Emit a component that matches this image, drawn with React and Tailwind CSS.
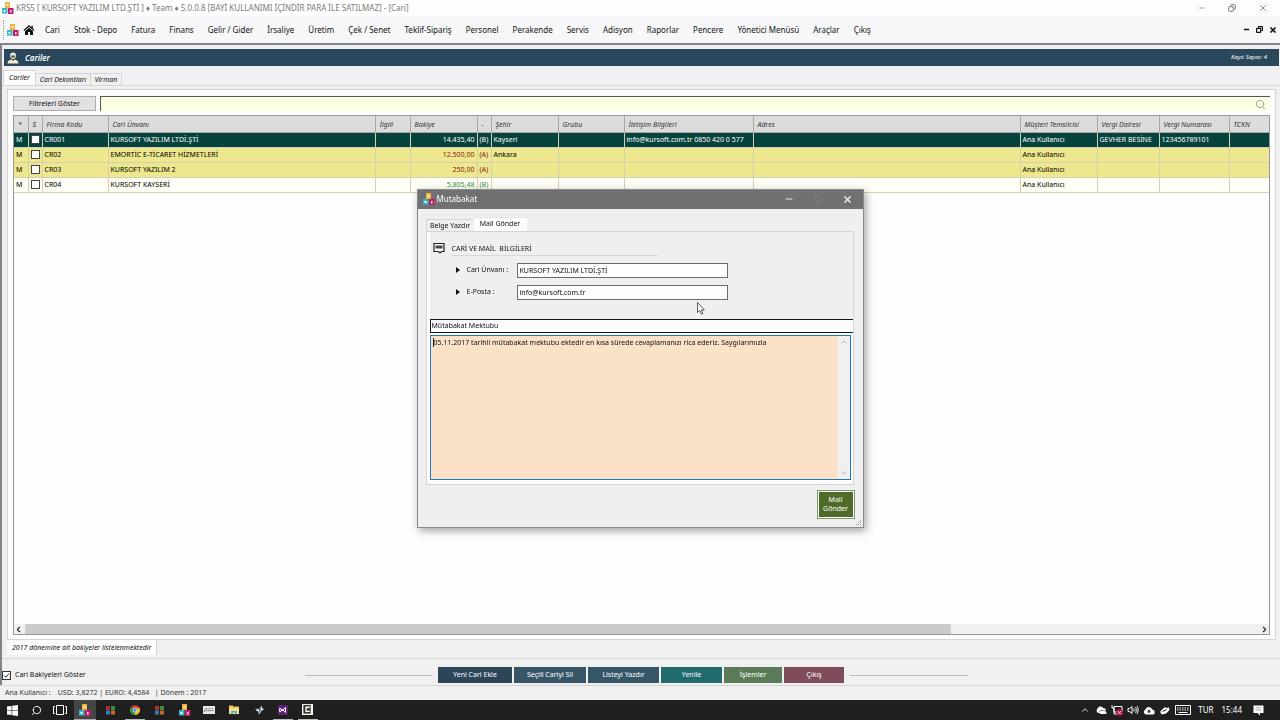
import React, { useState } from "react";
import { Search, X, Minus, Square, Copy, ChevronUp, ChevronDown, ChevronLeft, ChevronRight } from "lucide-react";

const menuItems = [
  "Cari", "Stok - Depo", "Fatura", "Finans", "Gelir / Gider", "İrsaliye", "Üretim",
  "Çek / Senet", "Teklif-Sipariş", "Personel", "Perakende", "Servis", "Adisyon",
  "Raporlar", "Pencere", "Yönetici Menüsü", "Araçlar", "Çıkış",
];

const columns = [
  { key: "mark", label: "*", col: "w-[14px]" },
  { key: "sel", label: "S", col: "w-[14px]" },
  { key: "code", label: "Firma Kodu", col: "w-[66px]" },
  { key: "title", label: "Cari Ünvanı", col: "w-[267px]" },
  { key: "contact", label: "İlgili", col: "w-[35px]" },
  { key: "balance", label: "Bakiye", col: "w-[67px]" },
  { key: "side", label: "-", col: "w-[14px]" },
  { key: "city", label: "Şehir", col: "w-[67px]" },
  { key: "group", label: "Grubu", col: "w-[66px]" },
  { key: "info", label: "İletişim Bilgileri", col: "w-[129px]" },
  { key: "address", label: "Adres", col: "w-[267px]" },
  { key: "agent", label: "Müşteri Temsilcisi", col: "w-[77px]" },
  { key: "office", label: "Vergi Dairesi", col: "w-[62px]" },
  { key: "taxNo", label: "Vergi Numarası", col: "w-[70px]" },
  { key: "tckn", label: "TCKN", col: "" },
];

const rows = [
  {
    code: "CR001", title: "KURSOFT YAZILIM LTDİ.ŞTİ", balance: "14.435,40", side: "(B)", city: "Kayseri",
    info: "info@kursoft.com.tr 0850 420 0 577", agent: "Ana Kullanıcı", office: "GEVHER BESİNE", taxNo: "123456789101",
    style: "bg-[#06433c] text-white", tone: "text-white",
  },
  {
    code: "CR02", title: "EMORTİC E-TİCARET HİZMETLERİ", balance: "12.500,00", side: "(A)", city: "Ankara",
    agent: "Ana Kullanıcı", style: "bg-[#ede78d]", tone: "text-[#8b1a10]",
  },
  {
    code: "CR03", title: "KURSOFT YAZILIM 2", balance: "250,00", side: "(A)",
    agent: "Ana Kullanıcı", style: "bg-[#ede78d]", tone: "text-[#8b1a10]",
  },
  {
    code: "CR04", title: "KURSOFT KAYSERİ", balance: "5.805,48", side: "(B)",
    agent: "Ana Kullanıcı", style: "bg-[#fefef4]", tone: "text-[#35914b]",
  },
];

const actions = [
  { label: "Yeni Cari Ekle", style: "w-[74px] bg-[#2c4557]" },
  { label: "Seçili Cariyi Sil", style: "w-[72px] bg-[#365668]" },
  { label: "Listeyi Yazdır", style: "w-[71px] bg-[#365668]" },
  { label: "Yenile", style: "w-[61px] bg-[#216b6d]" },
  { label: "İşlemler", style: "w-[58px] bg-[#5b7b58]" },
  { label: "Çıkış", style: "w-[60px] bg-[#7f4d5a]" },
];

function Logo({ className = "size-3" }) {
  return (
    <svg viewBox="0 0 12 12" className={className}>
      <rect x="3" y="0" width="5" height="6" fill="#f2b33d" />
      <rect x="0" y="6" width="5.5" height="5.5" fill="#35b8c4" />
      <rect x="6" y="6" width="5.5" height="6" fill="#c21d6b" />
      <rect x="4.5" y="2" width="2" height="2" fill="#fff3cf" />
      <rect x="1.5" y="8" width="2" height="2" fill="#e3fbff" />
      <rect x="8" y="8" width="1.5" height="2.5" fill="#ffd9ec" />
    </svg>
  );
}

function HomeIcon() {
  return (
    <svg viewBox="0 0 12 12" className="size-3">
      <path d="M6 1 0.5 6l0.8 0.9L6 2.8l4.7 4.1 0.8-0.9L9.8 4.5V1.7H8.4v1.5z" fill="#111" />
      <path d="M6 3.8 2 7.2V11h3V8h2v3h3V7.2z" fill="#111" />
    </svg>
  );
}

function UserIcon() {
  return (
    <svg viewBox="0 0 12 12" className="size-3">
      <path d="M6 0.5c2 0 3 1.2 3 3C9 5.300 7.800 7 6 7S3 5.300 3 3.500c0-1.800 1-3 3-3z" fill="#f3ecc8" />
      <path d="M3.800 3.500C5 3.700 7 3.400 8.200 3.500 8 5 7.200 6 6 6S4 5 3.800 3.500z" fill="#4b6470" />
      <path d="M0.500 11.500c0-2.500 1.500-3.500 4-4L6 9l1.500-1.500c2.500 0.500 4 1.500 4 4z" fill="#f3ecc8" />
    </svg>
  );
}

function NoteIcon() {
  return (
    <svg viewBox="0 0 12 12" className="size-3">
      <path d="M1 1.500h10v8H8.500L7 11 5.500 9.500H1z" fill="#fdfdfd" stroke="#222" strokeWidth="1.200" />
      <path d="M2.500 3.500h7v3h-7z" fill="#444" />
    </svg>
  );
}

function Blocks() {
  return (
    <svg viewBox="0 0 10 10" className="size-2.5">
      <rect x="0" y="1" width="4" height="4" fill="#a83232" />
      <rect x="5" y="1" width="4" height="4" fill="#3f8c3a" />
      <rect x="0" y="5.500" width="4" height="4" fill="#2c7fb5" />
      <rect x="5" y="5.500" width="4" height="4" fill="#c26a2a" />
    </svg>
  );
}

const taskIcons = [
  { name: "KRS5", active: true, icon: <Logo /> },
  { name: "Bloklar", icon: <Blocks /> },
  {
    name: "Chrome",
    open: true,
    icon: (
      <svg viewBox="0 0 12 12" className="size-2.5">
        <path d="M6 6 1 3a6 6 0 0 1 10.200 0z" fill="#d9453a" />
        <path d="M6 6 11.200 3A6 6 0 0 1 6 12z" fill="#f2c230" />
        <path d="M6 6v6A6 6 0 0 1 0.800 3z" fill="#379f50" />
        <circle cx="6" cy="6" r="2.600" fill="#fff" />
        <circle cx="6" cy="6" r="2" fill="#4284e0" />
      </svg>
    ),
  },
  { name: "Bloklar 2", icon: <Blocks /> },
  { name: "KRS", icon: <Logo /> },
  {
    name: "Terminal",
    icon: (
      <svg viewBox="0 0 12 8" className="w-3 h-2">
        <rect width="12" height="8" fill="#e8eae8" />
        <path d="M1.500 2.500h9" stroke="#9aa6a2" strokeWidth="0.800" />
        <path d="M1.500 6c0-3 2-3 2.500-1M5 5.500c1-2 2-2 2.500 0M8.500 4.500h2" fill="none" stroke="#46655b" strokeWidth="0.900" />
      </svg>
    ),
  },
  {
    name: "Dosyalar",
    icon: (
      <svg viewBox="0 0 12 11" className="w-3 h-2.5">
        <path d="M0.500 0.500h4l1 1.200h6V10H0.500z" fill="#ecc95a" />
        <path d="M0.500 3.500h11V10H0.500z" fill="#f8e08a" />
        <path d="M3 10V6.500h6V10H7.500V8.200h-3V10z" fill="#45a3d6" />
      </svg>
    ),
  },
  {
    name: "Kuş",
    icon: (
      <svg viewBox="0 0 12 12" className="size-2.5">
        <path d="M1 4l5 1 3-4 1 3 2 1-3 2c-1 3-3 4-4 4l1-3-4-1 2-1z" fill="#e4edf2" />
        <path d="M6 5l3-3-1 5-2 2z" fill="#3b7096" />
      </svg>
    ),
  },
  {
    name: "Visual Studio",
    open: true,
    icon: (
      <svg viewBox="0 0 12 12" className="size-2.5">
        <rect width="12" height="12" fill="#5c2073" />
        <path d="M2 4v4l4-2 3 3V3L6 6z" fill="none" stroke="#fff" strokeWidth="1.200" />
      </svg>
    ),
  },
  {
    name: "Camtasia",
    open: true,
    icon: (
      <svg viewBox="0 0 12 12" className="size-[11px]">
        <rect width="12" height="12" fill="#f4f4f0" />
        <rect x="1.500" y="1" width="8" height="9.500" fill="#34362f" />
        <path d="M8.500 3.500H4.500v4.500h4" fill="none" stroke="#fff" strokeWidth="1.500" />
      </svg>
    ),
  },
];

function TitleBar() {
  return (
    <header className="flex h-4 shrink-0 items-center bg-[#fdfdfd] pl-0.5 pr-3">
      <Logo />
      <h1 className="ml-0.5 text-[8px] leading-4 text-[#7c7c7c]">
        KRS5 [ KURSOFT YAZILIM LTD.ŞTİ ] ♦ Team ♦ 5.0.0.8 [BAYİ KULLANIMI İÇİNDİR PARA İLE SATILMAZ] - [Cari]
      </h1>
      <div className="ml-auto flex items-center gap-[22px] text-[#777]">
        <button aria-label="Küçült"><Minus size={8} strokeWidth={2} /></button>
        <button aria-label="Geri yükle"><Copy size={8} strokeWidth={3} className="-scale-x-100" /></button>
        <button aria-label="Kapat"><X size={10} strokeWidth={2} /></button>
      </div>
    </header>
  );
}

function MenuBar() {
  return (
    <nav className="flex h-[27px] shrink-0 items-center bg-[#f7f7f9] pl-[3px] pr-[3px]">
      <span className="h-5 border-l border-dotted border-[#999]" />
      <span className="ml-[3px]"><Logo /></span>
      <span className="ml-1"><HomeIcon /></span>
      <div className="ml-2.5 flex gap-[14px] text-[8px] text-[#141414]">
        {menuItems.map((item) => (
          <button key={item} className="whitespace-nowrap">{item}</button>
        ))}
      </div>
      <div className="ml-auto flex items-center gap-1.5 text-[#111]">
        <button aria-label="Pencereyi küçült"><Minus size={7} strokeWidth={5} /></button>
        <button aria-label="Pencereyi geri yükle"><Copy size={7} strokeWidth={4} className="-scale-x-100" /></button>
        <button aria-label="Pencereyi kapat"><X size={8} strokeWidth={5} /></button>
      </div>
    </nav>
  );
}

function CustomerTable() {
  return (
    <table className="w-full table-fixed border-collapse leading-[14px]">
      <colgroup>
        {columns.map((c) => <col key={c.key} className={c.col} />)}
      </colgroup>
      <thead>
        <tr className="h-4 bg-[#dcdcdc] text-[#333]">
          {columns.map((c) => (
            <th
              key={c.key}
              className="overflow-hidden whitespace-nowrap border-b border-r border-[#a8a8a8] pb-0 pl-1 pr-0 pt-[3px] text-left font-normal italic leading-[12px] last:border-r-0"
            >
              {c.label}
            </th>
          ))}
        </tr>
      </thead>
      <tbody>
        {rows.map((row) => (
          <tr key={row.code} className={`h-[15px] ${row.style}`}>
            {columns.map((c) => (
              <td
                key={c.key}
                className={`overflow-hidden whitespace-nowrap border-b border-r border-[#d3d0b4] px-0.5 py-0 last:border-r-0 ${
                  c.key === "balance" ? `text-right ${row.tone}` : c.key === "side" ? row.tone : ""
                }`}
              >
                {c.key === "mark" && "M"}
                {c.key === "sel" && (
                  <input
                    type="checkbox"
                    aria-label={row.code}
                    className="block size-[9px] appearance-none border border-[#444] bg-white checked:bg-[#444]"
                  />
                )}
                {row[c.key]}
              </td>
            ))}
          </tr>
        ))}
      </tbody>
    </table>
  );
}

function Workspace() {
  return (
    <main className="flex min-h-0 flex-1 flex-col border-l-2 border-t-2 border-[#808488] bg-[#f0f0f0]">
      <div className="ml-0.5 mr-px mt-1 flex h-[17px] shrink-0 items-center bg-[#2a475b] pl-[3px] pr-3 text-white">
        <UserIcon />
        <h2 className="ml-1.5 text-[8px] font-semibold italic">Cariler</h2>
        <span className="ml-auto text-[6px] italic">Kayıt Sayısı: 4</span>
      </div>

      <div role="tablist" className="mt-1 flex h-[15px] shrink-0 items-end pl-px italic leading-[12px] text-[#111]">
        <button role="tab" className="h-[15px] w-[33px] border-x border-t border-[#d5d5d5] bg-white">Cariler</button>
        <button role="tab" className="h-3 w-[55px] border-r border-t border-[#d5d5d5] leading-[11px]">Cari Dekontları</button>
        <button role="tab" className="h-3 w-[31px] border-r border-t border-[#d5d5d5] leading-[11px]">Virman</button>
      </div>

      <div className="flex min-h-0 flex-1 flex-col border-y border-[#d5d5d5] pl-[5px] pr-1 pt-[3px]">
        <div className="flex min-h-0 flex-1 flex-col border border-[#d5d5d5] bg-[#fdfdfd] px-[5px] pb-1 pt-1.5">
          <div className="flex h-[15px] shrink-0 gap-1">
            <button className="w-[83px] border border-[#adadad] bg-[#e1e1e1] leading-[13px] text-[#111]">
              Filtreleri Göster
            </button>
            <div className="flex flex-1 items-center border-l border-t border-[#555] bg-[#fdffe3] pr-1">
              <input aria-label="Ara" className="h-full min-w-0 flex-1 bg-transparent px-1 outline-none" />
              <Search size={11} className="text-[#999]" />
            </div>
          </div>

          <div className="mt-1 flex min-h-0 flex-1 flex-col border border-[#999] bg-[#fdfdfd]">
            <CustomerTable />
            <div className="mt-auto flex h-[10px] items-center bg-[#f0f0f0] text-[#222]">
              <button aria-label="Sola kaydır" className="w-[11px]"><ChevronLeft size={9} strokeWidth={3} /></button>
              <div className="h-full flex-1">
                <div className="h-full w-3/4 bg-[#cbcbcb]" />
              </div>
              <button aria-label="Sağa kaydır"><ChevronRight size={9} strokeWidth={3} /></button>
            </div>
          </div>
        </div>
        <div className="flex h-[18px] shrink-0 items-start">
          <span className="h-[15px] border-r border-[#d5d5d5] bg-[#fdfdfd] px-[5px] italic leading-[16px] text-[#111]">
            2017 dönemine ait bakiyeler listelenmektedir
          </span>
        </div>
      </div>

      <div className="flex h-[26px] shrink-0 items-center pt-1.5">
        <div className="flex flex-1 items-center">
          <label className="flex items-center gap-1 text-[#111]">
            <span className="relative block size-[9px]">
              <input type="checkbox" defaultChecked className="block size-[9px] appearance-none border border-[#333] bg-white" />
              <svg viewBox="0 0 9 9" className="pointer-events-none absolute inset-0 size-[9px]">
                <path d="M2 4.500 3.800 6.300 7.200 2.500" fill="none" stroke="#222" />
              </svg>
            </span>
            Cari Bakiyeleri Göster
          </label>
          <span className="ml-auto mr-1.5 w-[127px] border-t border-[#bbb]" />
        </div>
        <div className="flex gap-0.5">
          {actions.map((a) => (
            <button key={a.label} className={`h-4 text-white ${a.style}`}>{a.label}</button>
          ))}
        </div>
        <div className="flex flex-1 items-center">
          <span className="ml-1.5 w-[118px] border-t border-[#bbb]" />
        </div>
      </div>
    </main>
  );
}

function Taskbar() {
  return (
    <footer className="flex h-5 shrink-0 items-center bg-[#1f1f1f] text-white">
      <button aria-label="Başlat" className="flex w-6 justify-center">
        <svg viewBox="0 0 12 12" className="size-[11px]" fill="#fff">
          <path d="M0 1.700 5 1v4.700H0zM5.700 0.900 12 0v5.700H5.700zM0 6.400h5V11L0 10.300zM5.700 6.400H12V12l-6.300-0.900z" />
        </svg>
      </button>
      <button aria-label="Ara" className="flex w-6 justify-center">
        <Search size={11} className="-scale-x-100" />
      </button>
      <button aria-label="Görev görünümü" className="flex w-6 justify-center">
        <svg viewBox="0 0 14 12" className="h-3 w-3.5" fill="none" stroke="#fff">
          <path d="M3.500 1.500h7v9h-7zM2 2.500H0.500v7H2M12 2.500h1.500v7H12" />
        </svg>
      </button>
      <div className="ml-0.5 flex h-full w-[244px] justify-between">
        {taskIcons.map((t) => (
          <button
            key={t.name}
            aria-label={t.name}
            className={`flex w-5 items-center justify-center border-b first:w-[22px] ${
              t.active ? "border-[#aaa] bg-[#454545]" : t.open ? "border-[#bbb]" : "border-transparent"
            }`}
          >
            {t.icon}
          </button>
        ))}
      </div>

      <div className="ml-auto flex items-center pr-4 text-[8px]">
        <ChevronUp size={10} />
        <svg viewBox="0 0 12 8" className="ml-[5px] h-2 w-3" fill="#fff">
          <path d="M3 7a3 3 0 0 1 0-5c1-2 4-2 5 0 2 0 3 1 3 2.500H6C5 4.500 4 5.500 4.500 7zM6 5h4a2 2 0 0 1 1 3H6a1.500 1.500 0 0 1 0-3z" />
        </svg>
        <svg viewBox="0 0 12 12" className="ml-1 size-3" fill="none" stroke="#fff">
          <path d="M1 1v3h2v6h3M3 2.500h8V8H3z" />
          <circle cx="8.500" cy="8.500" r="3.200" fill="#c41945" stroke="none" />
          <path d="m7.300 7.300 2.400 2.400m0-2.400L7.300 9.700" />
        </svg>
        <svg viewBox="0 0 12 10" className="ml-1 h-2.5 w-3" fill="none" stroke="#fff">
          <path d="M1 3.500h1.500L5 1.500v7L2.500 6.500H1zM7 3.500v3M8.500 2.200c1 1.500 1 4 0 5.600M10 1c1.500 2 1.500 6 0 8" />
        </svg>
        <svg viewBox="0 0 12 9" className="ml-1 h-[9px] w-3" fill="#fff">
          <path d="M3 8.500A2.600 2.600 0 0 1 2.500 3.500c0.500-3.500 6-3.500 6.500 0 3.500 0 3.500 5 0.500 5z" />
          <path d="M6 3.500 8 5.500H6.700V7H5.300V5.500H4z" fill="#1f1f1f" />
        </svg>
        <svg viewBox="0 0 10 9" className="ml-[5px] h-[9px] w-2.5" fill="#fff">
          <path d="M0.500 5 5 1l1 1 3-0.500L9.500 4 6 7.500 2 8.500 0.500 7z" />
          <path d="M2.500 5.500 6.500 3.500" stroke="#1f1f1f" />
        </svg>
        <svg viewBox="0 0 16 10" className="ml-[5px] h-2.5 w-4" fill="none" stroke="#fff">
          <path d="M0.500 0.500h15v9h-15z" />
          <path d="M2 3h12M2 5h12" strokeDasharray="1.500 1" />
          <path d="M3.500 7.500h9" />
        </svg>
        <span className="ml-[7px]">TUR</span>
        <time className="ml-2">15:44</time>
        <svg viewBox="0 0 11 11" className="ml-[11px] size-[11px]">
          <path d="M0.500 0.500h10V8H7v2.500L4.500 8h-4z" fill="#fff" />
          <path d="M2.500 2.800h6M2.500 5h6" stroke="#aaa" />
        </svg>
      </div>
    </footer>
  );
}

function MutabakatDialog() {
  const [title, setTitle] = useState("KURSOFT YAZILIM LTDİ.ŞTİ");
  const [mail, setMail] = useState("info@kursoft.com.tr");
  const [subject, setSubject] = useState("Mütabakat Mektubu");
  const [body, setBody] = useState(
    "05.11.2017 tarihli mütabakat mektubu ektedir en kısa sürede cevaplamanızı rica ederiz. Saygılarımızla"
  );

  return (
    <div className="pointer-events-none fixed inset-0 flex items-center justify-center pb-1">
      <section
        role="dialog"
        aria-label="Mutabakat"
        className="pointer-events-auto relative w-[447px] border border-[#8a8a8a] bg-[#efefef] text-[#111] shadow-[2px_3px_8px_rgba(0,0,0,0.35)]"
      >
        <div className="flex h-[19px] items-center bg-[#717173] pl-[5px] pr-2.5 text-white">
          <Logo />
          <h2 className="ml-0.5 text-[8px]">Mutabakat</h2>
          <div className="ml-auto flex items-center gap-5">
            <button aria-label="Küçült"><Minus size={10} strokeWidth={2} /></button>
            <button aria-label="Büyüt" disabled className="text-[#858587]"><Square size={8} /></button>
            <button aria-label="Kapat"><X size={11} strokeWidth={2.5} /></button>
          </div>
        </div>

        <div className="pl-2 pr-[9px] pt-2">
          <div role="tablist" className="flex h-[14px] items-end leading-[12px]">
            <button role="tab" className="h-3 w-12 border-l border-t border-[#d5d5d5] leading-[11px]">Belge Yazdır</button>
            <button role="tab" className="h-[14px] w-[53px] border-t border-[#e5e5e5] bg-[#fdfdfd]">Mail Gönder</button>
          </div>

          <div className="border border-[#d5d5d5] bg-[#fdfdfd] pb-1 pl-[3px]">
            <div className="h-[87px] bg-[#efefef] pl-[3px] pt-2.5">
              <div className="flex items-start">
                <NoteIcon />
                <h3 className="ml-[7px] w-[206px] border-b border-[#dcd4d8] leading-[13px]">
                  CARİ VE MAİL&nbsp; BİLGİLERİ
                </h3>
              </div>
              <div className="ml-[23px] mt-[7px] flex flex-col gap-[7px]">
                <div className="flex h-[15px] items-center">
                  <span className="border-y-[3px] border-l-4 border-y-transparent border-l-[#111]" />
                  <label htmlFor="unvan" className="ml-[7px] w-[50px]">Cari Ünvanı :</label>
                  <input
                    id="unvan"
                    value={title}
                    onChange={(e) => setTitle(e.target.value)}
                    className="h-[15px] w-[211px] border border-[#6a6a6a] bg-[#fdfdfd] px-0.5"
                  />
                </div>
                <div className="flex h-[15px] items-center">
                  <span className="border-y-[3px] border-l-4 border-y-transparent border-l-[#111]" />
                  <label htmlFor="eposta" className="ml-[7px] w-[50px]">E-Posta :</label>
                  <input
                    id="eposta"
                    type="email"
                    value={mail}
                    onChange={(e) => setMail(e.target.value)}
                    className="h-[15px] w-[211px] border border-[#6a6a6a] bg-[#fdfdfd] px-0.5"
                  />
                </div>
              </div>
            </div>

            <input
              aria-label="Konu"
              value={subject}
              onChange={(e) => setSubject(e.target.value)}
              className="block h-[14px] w-full border border-r-0 border-[#1a1a1a] bg-[#fdfdfd] px-px"
            />
            <div className="relative mr-0.5 mt-0.5 flex h-[145px] border border-[#1e78b4]">
              <textarea
                aria-label="Mesaj"
                value={body}
                onChange={(e) => setBody(e.target.value)}
                className="h-full flex-1 resize-none overflow-hidden bg-[#fae1c7] px-[3px] pt-px leading-[11px] outline-none"
              />
              <span className="absolute left-[2px] top-[2px] h-[9px] w-px bg-[#222]" />
              <div className="flex w-3 flex-col items-center justify-between bg-[#f0f0f0] py-0.5 text-[#999]">
                <ChevronUp size={8} />
                <ChevronDown size={8} />
              </div>
            </div>
          </div>
        </div>

        <div className="flex justify-end pb-2 pr-2 pt-[5px]">
          <button className="h-[29px] w-[38px] border border-[#7a9a6a] bg-white p-px leading-[9px] text-white">
            <span className="flex h-full items-center justify-center bg-[#4f6b2a]">Mail<br />Gönder</span>
          </button>
        </div>
        <svg viewBox="0 0 6 6" className="absolute bottom-px right-px size-1.5" fill="#999">
          <path d="M4 0h1v1H4zM2 2h1v1H2zM4 2h1v1H4zM0 4h1v1H0zM2 4h1v1H2zM4 4h1v1H4z" />
        </svg>
      </section>

      <svg viewBox="0 0 8 13" className="absolute left-[697px] top-[302px] h-[13px] w-2">
        <path d="M0.500 0.500v10l2.300-2 1.600 3.700 1.500-0.700-1.600-3.500h3z" fill="#fff" stroke="#333" strokeWidth="0.800" />
      </svg>
    </div>
  );
}

export default function App() {
  return (
    <div className="flex h-screen flex-col overflow-hidden bg-[#f0f0f0] font-['Noto_Sans','Open_Sans',sans-serif] text-[7px]">
      <TitleBar />
      <MenuBar />
      <Workspace />
      <div className="flex h-[15px] shrink-0 items-center gap-[7px] border-t border-[#d5d5d5] pl-[5px] text-[#333]">
        <span>Ana Kullanıcı :</span>
        <span>USD: 3,8272 | EURO: 4,4584 &nbsp; | Dönem : 2017</span>
      </div>
      <Taskbar />
      <MutabakatDialog />
    </div>
  );
}
